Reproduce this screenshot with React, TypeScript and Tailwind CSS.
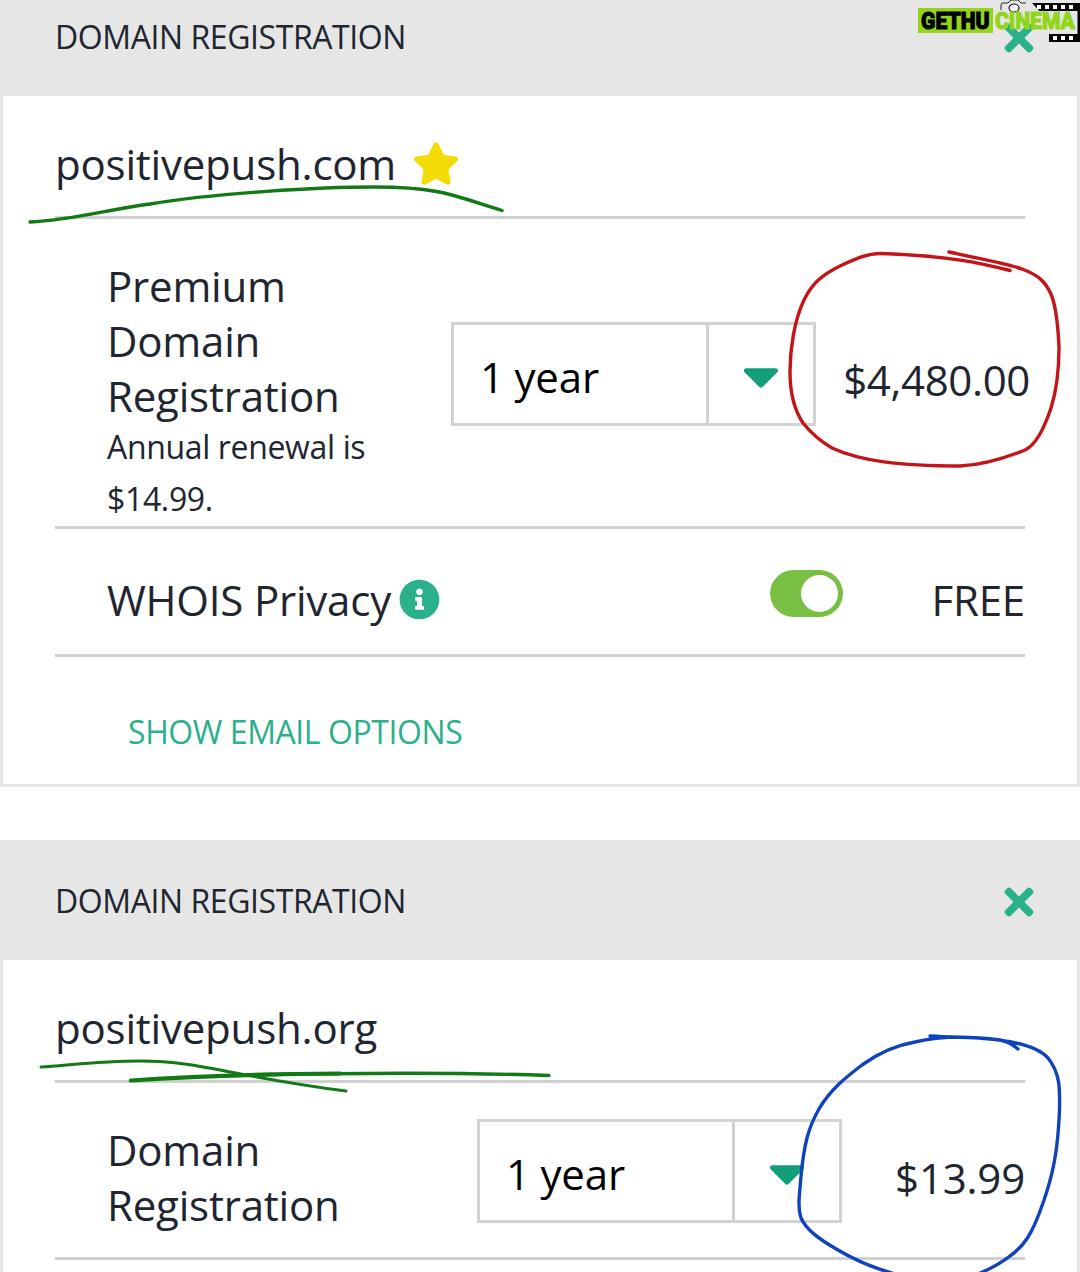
import React from 'react';
import { FaInfoCircle, FaTimes } from 'react-icons/fa';
import { FaStar } from 'react-icons/fa6';

const CardHeader: React.FC = () => (
  <header className="flex h-[120px] items-center justify-between bg-[#e6e6e6] pl-[55px] pr-[40px]">
    <h2 className="pt-0.5 text-[32px] leading-[48px] tracking-[-0.42px]">DOMAIN REGISTRATION</h2>
    <button type="button" aria-label="Remove" className="mt-1 text-[#2bb08c]">
      <FaTimes className="h-[42px] w-[42px]" />
    </button>
  </header>
);

const Select: React.FC<{ value: string }> = ({ value }) => (
  <div className="flex h-[104px] w-[365px] shrink-0 border-[3px] border-[#d2d2d2] text-black">
    <div className="flex flex-1 items-center pl-[26px] pt-1">{value}</div>
    <div className="flex w-[107px] items-center justify-center border-l-[3px] border-[#d2d2d2] pt-[7px]">
      <svg viewBox="12 192 297 169" className="h-[20px] w-[34px] fill-[#139e79]">
        <path d="M31.3 192h257.3c17.8 0 26.7 21.5 14.1 34.1L174.1 354.8c-7.8 7.8-20.5 7.8-28.3 0L17.2 226.1C4.6 213.5 13.5 192 31.3 192z" />
      </svg>
    </div>
  </div>
);

const Toggle: React.FC = () => (
  <div className="flex h-[47px] w-[73px] items-center justify-end rounded-full bg-[#79bf43] pr-[5px]">
    <div className="h-[37px] w-[37px] rounded-full bg-white" />
  </div>
);

const Watermark: React.FC = () => (
  <div className="absolute right-0 top-0 h-[50px] w-[170px]">
    <svg viewBox="0 0 170 50" className="absolute inset-0 h-[50px] w-[170px]">
      {/* film strip */}
      <path d="M122 3h48v39h-31v-8h28.500V11h-38z" fill="#000" />
      <g fill="#fff">
        <rect x="127" y="5" width="4" height="4" />
        <rect x="135" y="5" width="4" height="4" />
        <rect x="143" y="5" width="4" height="4" />
        <rect x="151" y="5" width="4" height="4" />
        <rect x="159" y="5" width="4" height="4" />
        <rect x="143" y="36" width="4" height="4" />
        <rect x="151" y="36" width="4" height="4" />
        <rect x="159" y="36" width="4" height="4" />
      </g>
      {/* camera */}
      <path d="M91 12V5q0-2 2-2h5l3-3h7l3 3h10l6 8v3z" fill="#e6e6e6" />
      <path d="M91 10V5q0-2 2-2h5l3-3h7l3 3h5" fill="none" stroke="#222" strokeWidth="1" />
      <ellipse cx="104" cy="8" rx="5" ry="4" fill="#f4f4f4" stroke="#222" strokeWidth="1.2" />
    </svg>
    <div className="relative flex pl-2 pt-2 font-[Roboto,sans-serif] text-[24px] font-black leading-[27px] tracking-normal">
      <div className="h-[25px] w-[75px] bg-[#93d51b] pl-[3px]">
        <span className="block w-[76px] origin-left scale-x-[0.88] text-black [-webkit-text-stroke:1px_#000]">
          GETHU
        </span>
      </div>
      <div className="h-[25px] w-[84px] pl-[2px]">
        <span className="block w-[90px] origin-left scale-x-[0.88] text-[#93d51b] [-webkit-text-stroke:1px_#93d51b]">
          CINEMA
        </span>
      </div>
    </div>
  </div>
);

const Scribbles: React.FC = () => (
  <svg
    viewBox="0 0 1080 1272"
    className="pointer-events-none absolute left-0 top-0 h-[1272px] w-[1080px]"
    fill="none"
    strokeWidth="3.4"
    strokeLinecap="round"
    strokeLinejoin="round"
  >
    <g stroke="#117a14">
      <path d="M30 222C72 220 110 209 150 204C215 193 320 187 375 187C440 187 455 196 502 210.500" />
      <path d="M41 1067C80 1064 105 1061 140 1061C200 1061 235 1077 346 1091" strokeWidth="3" />
      <path d="M131 1080.500C200 1076 260 1074 340 1073.500" strokeWidth="4.200" />
      <path d="M240 1075C340 1073 455 1072 549 1075.500" />
    </g>
    <path
      stroke="#c31518"
      d="M1010 270.500C980 263 950 256 882 253.500C868 253 855 259 840 266C820 276 812 284 804 300C794 321 790 350 790 372C790 400 797 414 803 423C811 433 820 441 832 448C860 461 900 466 960 466C980 465 1005 458 1025 450C1038 444 1046 423 1051 408C1058 386 1059 360 1059 347C1058 325 1056 306 1051 294C1045 281 1038 275 1022 269C1005 263 975 258 949 252"
    />
    <path
      stroke="#0f43bd"
      d="M930 1036C960 1038 985 1037 1005 1041C1025 1044 1040 1049 1048 1058C1060 1073 1060 1088 1059.500 1110C1058 1150 1053 1175 1043 1203C1032 1235 1024 1246 1010 1256C1000 1264 990 1269 978 1274M895 1274C870 1267 853 1259 838 1250C817 1238 806 1229 801 1218C797 1206 800 1192 801 1176C804 1145 808 1128 819 1109C830 1090 845 1078 862 1065C880 1052 897 1045 915 1042C940 1036 970 1036 1000 1040C1009 1042 1012 1044 1018 1049"
    />
  </svg>
);

export default function App() {
  return (
    <div className="relative h-[1272px] w-[1080px] overflow-hidden bg-white font-['Open_Sans',sans-serif] text-[42px] leading-[55px] tracking-[-0.2px] text-[#20252f]">
      <section className="-mt-6">
        <CardHeader />
        <div className="h-[691px] border-x-[3px] border-b-[3px] border-[#e6e6e6] px-[52px]">
          <div className="flex h-[123px] items-center border-b-[3px] border-[#d0d0d0] pt-[14px]">
            <span>positivepush.com</span>
            <FaStar className="ml-4 h-[43px] w-[48px] text-[#f3dc05]" />
          </div>

          <div className="flex h-[310px] border-b-[3px] border-[#d0d0d0] pl-[52px]">
            <div className="w-[344px] pt-[39px]">
              <p className="w-[240px]">Premium Domain Registration</p>
              <p className="-mt-0.5 w-[290px] text-[32px] leading-[52px] tracking-[-0.35px]">
                Annual renewal is $14.99.
              </p>
            </div>
            <div className="pt-[103px]">
              <Select value="1 year" />
            </div>
            <div className="-mr-[5px] flex-1 pt-[133px] text-right tracking-[-0.35px]">$4,480.00</div>
          </div>

          <div className="flex h-[128px] items-center border-b-[3px] border-[#d0d0d0] pl-[52px] pt-[15px]">
            <span>WHOIS Privacy</span>
            <FaInfoCircle className="ml-2 h-[41px] w-[41px] text-[#2bb08c]" />
            <div className="-mt-3 ml-auto">
              <Toggle />
            </div>
            <div className="w-[182px] text-right">FREE</div>
          </div>

          <a
            href="#email"
            className="ml-[73px] mt-[51px] block text-[32px] leading-[48px] tracking-[-0.42px] text-[#2bb08c]"
          >
            SHOW EMAIL OPTIONS
          </a>
        </div>
      </section>

      <section className="mt-[53px]">
        <CardHeader />
        <div className="h-[340px] border-x-[3px] border-[#e6e6e6] px-[52px]">
          <div className="flex h-[123px] items-center border-b-[3px] border-[#d0d0d0] pt-[14px]">positivepush.org</div>

          <div className="flex h-[177px] border-b-[3px] border-[#d0d0d0] pl-[52px]">
            <p className="w-[370px] pr-[100px] pt-[39px]">Domain Registration</p>
            <div className="pt-[36px]">
              <Select value="1 year" />
            </div>
            <div className="flex-1 pt-[67px] text-right">$13.99</div>
          </div>
        </div>
      </section>

      <Scribbles />
      <Watermark />
    </div>
  );
}
